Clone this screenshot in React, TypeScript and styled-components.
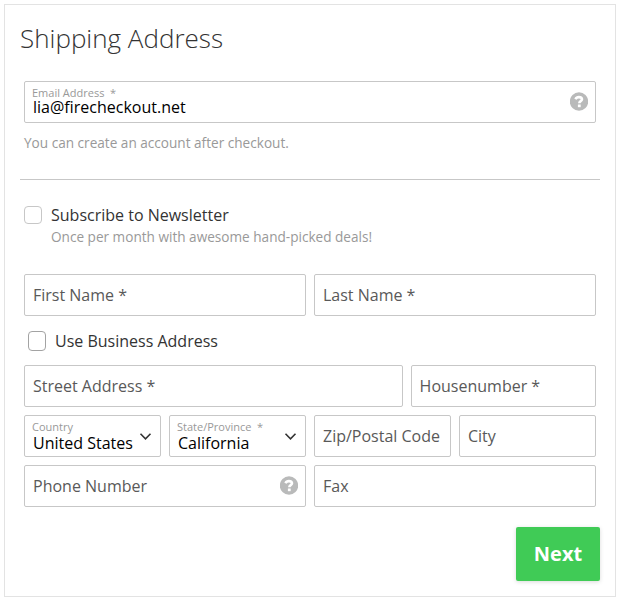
import React from 'react';
import styled, { createGlobalStyle } from 'styled-components';

const GlobalStyle = createGlobalStyle`
  * { box-sizing: border-box; }
  body {
    margin: 0;
    background: #fff;
    color: #333;
    font-family: "Open Sans", "Noto Sans", sans-serif;
    font-size: 16px;
  }
`;

const Card = styled.form`
  width: 612px;
  height: 593px;
  margin: 4px;
  padding: 15px;
  border: 1px solid #e3e3e3;
  display: flex;
  flex-direction: column;
`;

const Title = styled.h1`
  margin: 0;
  height: 38px;
  font-size: 26px;
  line-height: 37px;
  font-weight: 300;
`;

const Section = styled.div<{ $top: number; $gap?: number }>`
  display: flex;
  flex-direction: column;
  gap: ${(p) => p.$gap ?? 8}px;
  padding: 0 4px;
  margin-top: ${(p) => p.$top}px;
`;

const Row = styled.div<{ $columns: string }>`
  display: grid;
  grid-template-columns: ${(p) => p.$columns};
  gap: 8px;
`;

const FieldBox = styled.label`
  display: flex;
  align-items: center;
  height: 42px;
  padding: 0 7px 0 8px;
  border: 1px solid #c7c7c7;
  border-radius: 2px;
  background: #fff;
`;

const Placeholder = styled.span`
  color: #595959;
  line-height: 22px;
  white-space: nowrap;
`;

const BlankInput = styled.input`
  flex: 1;
  width: 0;
  min-width: 0;
  padding: 0;
  border: 0;
  outline: 0;
  background: transparent;
  font: inherit;
`;

const Filled = styled.span`
  flex: 1;
  min-width: 0;
  height: 36px;
  display: flex;
  flex-direction: column;
  padding-top: 2px;
`;

const Caption = styled.span<{ $height: number }>`
  margin-left: -1px;
  height: ${(p) => p.$height}px;
  font-size: 11px;
  line-height: 14px;
  color: #999;
  white-space: pre;
`;

const Value = styled.span`
  height: 16px;
  line-height: 16px;
  color: #000;
  white-space: nowrap;
`;

const Hint = styled.p`
  margin: 0;
  font-size: 13.6px;
  line-height: 18px;
  color: #999;
`;

const Divider = styled.hr`
  width: 100%;
  height: 1px;
  margin: 27px 0 0;
  border: 0;
  flex: none;
  background: #c7c7c7;
`;

const CheckRow = styled.label<{ $indent?: number }>`
  display: flex;
  align-items: center;
  height: 22px;
  gap: 9px;
  margin-left: ${(p) => p.$indent ?? 0}px;
`;

const Checkbox = styled.input.attrs({ type: 'checkbox' })<{ $height: number; $tone: string }>`
  appearance: none;
  width: 18px;
  height: ${(p) => p.$height}px;
  margin: 0;
  border: 1px solid ${(p) => p.$tone};
  border-radius: 4px;
  background: #fff;
`;

const Newsletter = styled.div`
  display: flex;
  flex-direction: column;
`;

const NewsletterHint = styled(Hint)`
  margin: 2px 0 0 27px;
`;

const Actions = styled.div`
  display: flex;
  justify-content: flex-end;
  margin-top: 20px;
`;

const NextButton = styled.button`
  width: 84px;
  height: 54px;
  padding: 0;
  border: 0;
  border-radius: 2px;
  background: #40cb56;
  box-shadow: 0 1px 4px rgba(0, 0, 0, 0.15);
  color: #fff;
  font: 700 20px/54px "Open Sans", sans-serif;
`;

const Icon = styled.svg`
  display: block;
  flex: none;
`;

const HelpIcon = () => (
  <Icon width="18" height="20" viewBox="0 0 18 20">
    <circle cx="9" cy="9.5" r="9.2" fill="#b9baba" />
    <path
      d="M5.5 7.2C6.2 5.7 7.4 5.1 8.9 5.1c1.9 0 3.1 .8 3.1 2.2 0 2-2.7 1.7-2.7 3.9"
      fill="none"
      stroke="#fff"
      strokeWidth="2.6"
    />
    <rect x="7.9" y="12.5" width="2.8" height="2.7" fill="#fff" />
  </Icon>
);

const Chevron = () => (
  <Icon width="16" height="12" viewBox="0 0 16 12">
    <path d="M3.5 3.8 8.5 8.8l5-5" fill="none" stroke="#333" strokeWidth="1.6" />
  </Icon>
);

const EmptyField = ({ text, help }: { text: string; help?: boolean }) => (
  <FieldBox>
    <Placeholder>{text}</Placeholder>
    <BlankInput />
    {help && <HelpIcon />}
  </FieldBox>
);

type FilledProps = {
  caption: string;
  value: string;
  captionHeight?: number;
  children: React.ReactNode;
};

const FilledField = ({ caption, value, captionHeight = 15, children }: FilledProps) => (
  <FieldBox>
    <Filled>
      <Caption $height={captionHeight}>{caption}</Caption>
      <Value>{value}</Value>
    </Filled>
    {children}
  </FieldBox>
);

export default function App() {
  return (
    <>
      <GlobalStyle />
      <Card>
        <Title>Shipping Address</Title>
        <Section $top={23} $gap={11}>
          <FilledField caption="Email Address  *" value="lia@firecheckout.net" captionHeight={13}>
            <HelpIcon />
          </FilledField>
          <Hint>You can create an account after checkout.</Hint>
        </Section>
        <Divider />
        <Section $top={24}>
          <Newsletter>
            <CheckRow>
              <Checkbox $height={18} $tone="#c7c7c7" />
              Subscribe to Newsletter
            </CheckRow>
            <NewsletterHint>Once per month with awesome hand-picked deals!</NewsletterHint>
          </Newsletter>
        </Section>
        <Section $top={28}>
          <Row $columns="1fr 1fr">
            <EmptyField text="First Name *" />
            <EmptyField text="Last Name *" />
          </Row>
        </Section>
        <Section $top={14}>
          <CheckRow $indent={4}>
            <Checkbox $height={20} $tone="#a3a3a3" />
            Use Business Address
          </CheckRow>
        </Section>
        <Section $top={13}>
          <Row $columns="378.6px 1fr">
            <EmptyField text="Street Address *" />
            <EmptyField text="Housenumber *" />
          </Row>
          <Row $columns="repeat(4, 1fr)">
            <FilledField caption="Country" value="United States">
              <Chevron />
            </FilledField>
            <FilledField caption="State/Province  *" value="California">
              <Chevron />
            </FilledField>
            <EmptyField text="Zip/Postal Code" />
            <EmptyField text="City" />
          </Row>
          <Row $columns="1fr 1fr">
            <EmptyField text="Phone Number" help />
            <EmptyField text="Fax" />
          </Row>
        </Section>
        <Actions>
          <NextButton type="button">Next</NextButton>
        </Actions>
      </Card>
    </>
  );
}
